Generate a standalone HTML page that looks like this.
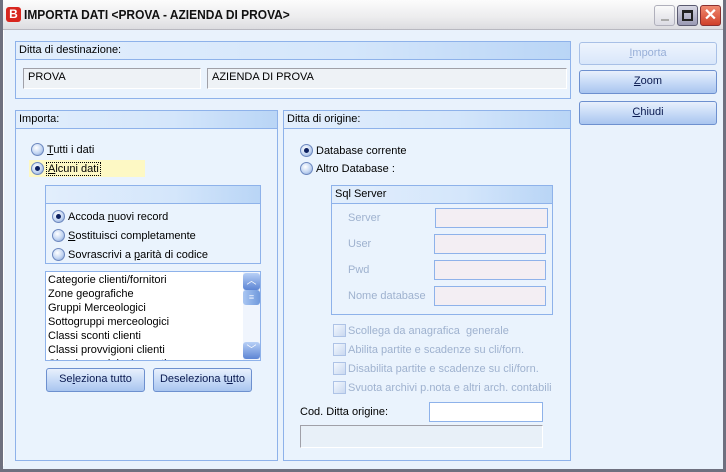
<!DOCTYPE html>
<html><head><meta charset="utf-8"><style>
*{margin:0;padding:0;box-sizing:border-box}
body{width:726px;height:472px;overflow:hidden;font-family:"Liberation Sans",sans-serif;font-size:11px;background:#e9f2fc;position:relative;color:#000}
.a{position:absolute}
#frame{left:0;top:0;width:726px;height:472px;border:3px solid #6e707f;border-top:none;}
#title{left:0;top:0;width:726px;height:30px;background:linear-gradient(#fcfcfc,#ececee 60%,#dcdce0);border-bottom:1px solid #b8b8c0}
#title .t{left:24px;top:7px;font-size:13px;font-weight:bold;color:#111;transform:scaleX(0.92);transform-origin:0 0;white-space:nowrap}
.grp{border:1px solid #8eb2ea;background:#eaf3fd}
.gh{position:absolute;left:0;top:0;right:0;height:18px;background:linear-gradient(90deg,#e2eefc 0%,#d4e6fb 60%,#b9d5f6 100%);border-bottom:1px solid #8eb2ea;padding:2px 3px;font-size:11px}
.inp{background:#eef2f6;border:1px solid #a0a0a8;border-right-color:#fff;border-bottom-color:#fff;padding:2px 4px}
.btn{border:1px solid #6d90cf;border-radius:3px;background:linear-gradient(#e8f0fc,#c8dbf7 50%,#a9c5ef);text-align:center;line-height:21px;color:#0a1a50}
.rad{width:13px;height:13px;border-radius:50%;background:radial-gradient(circle at 40% 35%,#fff,#c4d6f2 55%,#7d9ad0);border:1px solid #6d88bf}
.rad.on::after{content:"";position:absolute;left:3px;top:3px;width:5px;height:5px;border-radius:50%;background:#0c2060}
.lbl{white-space:nowrap}
.dis{color:#9fb2cf}
.sqi{background:#f3eef3;border:1px solid #8eb2ea}
.chk{width:13px;height:13px;border:1px solid #aec3e6;background:linear-gradient(135deg,#f4f8fe,#c9d8f0)}
</style></head><body>
<div id="title" class="a">
 <div class="a" style="left:6px;top:7px;width:15px;height:15px;background:#d8261f;border-radius:3px;color:#fff;font-weight:bold;font-size:12px;line-height:15px;text-align:center">B</div>
 <div class="a t">IMPORTA DATI &lt;PROVA - AZIENDA DI PROVA&gt;</div>
 <div class="a" style="left:654px;top:5px;width:21px;height:21px;border:1px solid #b0b0bc;border-radius:3px;background:linear-gradient(#fafafa,#dcdce4)"><div class="a" style="left:6px;top:13px;width:8px;height:2px;background:#aaa"></div></div>
 <div class="a" style="left:677px;top:5px;width:21px;height:21px;border:1px solid #5a5a70;border-radius:3px;background:linear-gradient(#d8d8e4,#9a9ab4)"><div class="a" style="left:4px;top:4px;width:11px;height:11px;border:2px solid #222;border-top-width:3px"></div></div>
 <div class="a" style="left:700px;top:5px;width:21px;height:21px;border:1px solid #8a3030;border-radius:3px;background:linear-gradient(#f08a70,#d0402a);color:#fff;font-size:16px;font-weight:bold;line-height:19px;text-align:center">✕</div>
</div>
<div id="frame" class="a"></div>
<div class="a" style="left:3px;top:30px;width:1px;height:436px;background:#fff"></div>

<div class="a grp" style="left:15px;top:41px;width:556px;height:58px"><div class="gh">Ditta di destinazione:</div>
 <div class="a inp" style="left:7px;top:26px;width:178px;height:21px">PROVA</div>
 <div class="a inp" style="left:191px;top:26px;width:360px;height:21px">AZIENDA DI PROVA</div>
</div>

<div class="a btn" style="left:579px;top:42px;width:138px;height:23px;color:#98afd8;border-color:#a8c0e6;background:linear-gradient(#eef4fd,#d8e6fa)"><u>I</u>mporta</div>
<div class="a btn" style="left:579px;top:70px;width:138px;height:24px"><u>Z</u>oom</div>
<div class="a btn" style="left:579px;top:101px;width:138px;height:24px"><u>C</u>hiudi</div>

<div class="a grp" style="left:15px;top:110px;width:263px;height:351px"><div class="gh">Importa:</div></div>
<div class="a" style="left:29px;top:160px;width:116px;height:17px;background:#fdf8c4"></div>
<div class="a rad" style="left:31px;top:143px"></div><div class="a lbl" style="left:47px;top:144px"><u>T</u>utti i dati</div>
<div class="a rad on" style="left:31px;top:162px"></div><div class="a lbl" style="left:46px;top:162px;border:1px dotted #000;padding:0 1px"><u>A</u>lcuni dati</div>

<div class="a grp" style="left:45px;top:185px;width:216px;height:79px;background:#eaf3fd"><div class="gh"></div></div>
<div class="a rad on" style="left:52px;top:210px"></div><div class="a lbl" style="left:68px;top:211px">Accoda <u>n</u>uovi record</div>
<div class="a rad" style="left:52px;top:229px"></div><div class="a lbl" style="left:68px;top:230px"><u>S</u>ostituisci completamente</div>
<div class="a rad" style="left:52px;top:248px"></div><div class="a lbl" style="left:68px;top:249px">Sovrascrivi a <u>p</u>arità di codice</div>

<div class="a" style="left:45px;top:271px;width:216px;height:90px;background:#fff;border:1px solid #8eb2ea;overflow:hidden">
 <div style="padding:1px 2px;line-height:14px">Categorie clienti/fornitori<br>Zone geografiche<br>Gruppi Merceologici<br>Sottogruppi merceologici<br>Classi sconti clienti<br>Classi provvigioni clienti<br>Classi provvigioni agenti</div>
 <div class="a" style="left:197px;top:0;width:17px;height:88px;background:#f0f5fd"></div>
 <div class="a" style="left:197px;top:1px;width:17px;height:17px;border-radius:3px;background:linear-gradient(#b8d0f6,#5d85d4);color:#fff;font-size:10px;text-align:center;line-height:17px">︿</div>
 <div class="a" style="left:197px;top:18px;width:17px;height:15px;border-radius:3px;background:linear-gradient(90deg,#a9c6f2,#7099dc);color:#e8f0ff;font-size:9px;text-align:center;line-height:15px">≡</div>
 <div class="a" style="left:197px;top:70px;width:17px;height:17px;border-radius:3px;background:linear-gradient(#b8d0f6,#5d85d4);color:#fff;font-size:10px;text-align:center;line-height:17px">﹀</div>
</div>
<div class="a btn" style="left:46px;top:368px;width:99px;height:24px">Se<u>l</u>eziona tutto</div>
<div class="a btn" style="left:153px;top:368px;width:99px;height:24px">Deseleziona t<u>u</u>tto</div>

<div class="a grp" style="left:283px;top:110px;width:288px;height:351px"><div class="gh">Ditta di origine:</div></div>
<div class="a rad on" style="left:300px;top:144px"></div><div class="a lbl" style="left:316px;top:145px">Database corrente</div>
<div class="a rad" style="left:300px;top:162px"></div><div class="a lbl" style="left:316px;top:163px">Altro Database :</div>

<div class="a grp" style="left:331px;top:185px;width:222px;height:130px"><div class="gh">Sql Server</div></div>
<div class="a lbl dis" style="left:348px;top:212px">Server</div><div class="a sqi" style="left:435px;top:208px;width:113px;height:20px"></div>
<div class="a lbl dis" style="left:348px;top:238px">User</div><div class="a sqi" style="left:434px;top:234px;width:112px;height:20px"></div>
<div class="a lbl dis" style="left:348px;top:264px">Pwd</div><div class="a sqi" style="left:434px;top:260px;width:112px;height:20px"></div>
<div class="a lbl dis" style="left:348px;top:290px">Nome database</div><div class="a sqi" style="left:434px;top:286px;width:112px;height:20px"></div>

<div class="a chk" style="left:333px;top:324px"></div><div class="a lbl dis" style="left:348px;top:325px">Scollega da anagrafica&nbsp; generale</div>
<div class="a chk" style="left:333px;top:343px"></div><div class="a lbl dis" style="left:348px;top:344px">Abilita partite e scadenze su cli/forn.</div>
<div class="a chk" style="left:333px;top:362px"></div><div class="a lbl dis" style="left:348px;top:363px">Disabilita partite e scadenze su cli/forn.</div>
<div class="a chk" style="left:333px;top:381px"></div><div class="a lbl dis" style="left:348px;top:382px">Svuota archivi p.nota e altri arch. contabili</div>

<div class="a lbl" style="left:300px;top:406px">Cod. Ditta origine:</div>
<div class="a" style="left:429px;top:402px;width:114px;height:20px;background:#fff;border:1px solid #8eb2ea"></div>
<div class="a inp" style="left:300px;top:425px;width:243px;height:23px;background:#e8f0f8"></div>
</body></html>
